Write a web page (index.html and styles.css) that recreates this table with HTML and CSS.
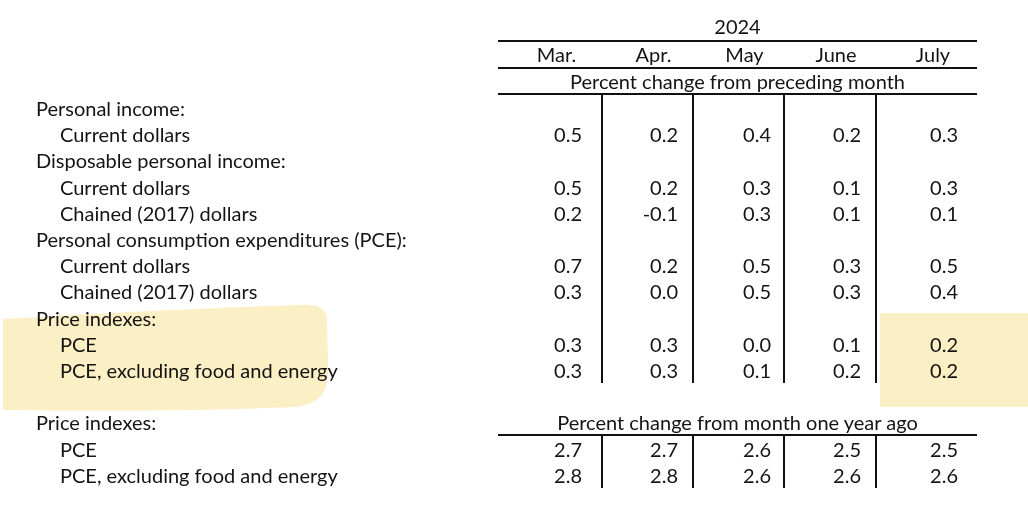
FILE: index.html
```html
<!DOCTYPE html>
<html lang="en">
<head>
<meta charset="utf-8">
<title>Personal income and outlays</title>
<link rel="stylesheet" href="styles.css">
</head>
<body>
<div class="page">
  <div class="grid">
    <div class="lbl head"></div><div class="span year">2024</div>
    <div class="lbl rule-pad"></div><div class="span rule"></div>
    <div class="lbl head"></div>
    <div class="mon">Mar.</div><div class="mon">Apr.</div><div class="mon">May</div><div class="mon">June</div><div class="mon">July</div>
    <div class="lbl rule-pad"></div><div class="span rule"></div>
    <div class="lbl head"></div><div class="span unit">Percent change from preceding month</div>
    <div class="lbl rule-pad"></div><div class="span rule"></div>

    <div class="lbl">Personal income:</div>
    <div class="n c1"></div><div class="n c2"></div><div class="n c3"></div><div class="n c4"></div><div class="n c5"></div>
    <div class="lbl sub">Current dollars</div>
    <div class="n c1">0.5</div><div class="n c2">0.2</div><div class="n c3">0.4</div><div class="n c4">0.2</div><div class="n c5">0.3</div>
    <div class="lbl">Disposable personal income:</div>
    <div class="n c1"></div><div class="n c2"></div><div class="n c3"></div><div class="n c4"></div><div class="n c5"></div>
    <div class="lbl sub">Current dollars</div>
    <div class="n c1">0.5</div><div class="n c2">0.2</div><div class="n c3">0.3</div><div class="n c4">0.1</div><div class="n c5">0.3</div>
    <div class="lbl sub">Chained (2017) dollars</div>
    <div class="n c1">0.2</div><div class="n c2">-0.1</div><div class="n c3">0.3</div><div class="n c4">0.1</div><div class="n c5">0.1</div>
    <div class="lbl">Personal consumption expenditures (PCE):</div>
    <div class="n c1"></div><div class="n c2"></div><div class="n c3"></div><div class="n c4"></div><div class="n c5"></div>
    <div class="lbl sub">Current dollars</div>
    <div class="n c1">0.7</div><div class="n c2">0.2</div><div class="n c3">0.5</div><div class="n c4">0.3</div><div class="n c5">0.5</div>
    <div class="lbl sub">Chained (2017) dollars</div>
    <div class="n c1">0.3</div><div class="n c2">0.0</div><div class="n c3">0.5</div><div class="n c4">0.3</div><div class="n c5">0.4</div>
    <div class="lbl">Price indexes:</div>
    <div class="n c1"></div><div class="n c2"></div><div class="n c3"></div><div class="n c4"></div><div class="n c5"></div>
    <div class="lbl sub">PCE</div>
    <div class="n c1">0.3</div><div class="n c2">0.3</div><div class="n c3">0.0</div><div class="n c4">0.1</div><div class="n c5">0.2</div>
    <div class="lbl sub">PCE, excluding food and energy</div>
    <div class="n c1">0.3</div><div class="n c2">0.3</div><div class="n c3">0.1</div><div class="n c4">0.2</div><div class="n c5">0.2</div>

    <div class="gap"></div>

    <div class="lbl head2">Price indexes:</div><div class="span unit2">Percent change from month one year ago</div>
    <div class="lbl rule-pad"></div><div class="span rule"></div>
    <div class="lbl sub">PCE</div>
    <div class="n c1">2.7</div><div class="n c2">2.7</div><div class="n c3">2.6</div><div class="n c4">2.5</div><div class="n c5">2.5</div>
    <div class="lbl sub">PCE, excluding food and energy</div>
    <div class="n c1">2.8</div><div class="n c2">2.8</div><div class="n c3">2.6</div><div class="n c4">2.6</div><div class="n c5">2.6</div>
  </div>

  <svg class="hl hl-left" width="340" height="420" viewBox="0 0 340 420" aria-hidden="true">
    <path d="M3,319 C90,314 200,308 300,305 C318,304 326,308 327,320 L328,370 C328,392 320,404 296,407 C200,411 100,411 3,410 Z"/>
  </svg>
  <svg class="hl hl-right" width="148" height="94" viewBox="0 0 148 94" aria-hidden="true">
    <path d="M0,0 H148 V94 H0 Z"/>
  </svg>
</div>
</body>
</html>
```

FILE: styles.css
```css
html, body {
  margin: 0;
  padding: 0;
  background: #ffffff;
}

body {
  font-family: Lato, "Open Sans", "Liberation Sans", sans-serif;
  font-size: 20px;
  color: #141414;
}

.page {
  position: relative;
  width: 1028px;
  height: 516px;
  overflow: hidden;
}

.grid {
  display: grid;
  grid-template-columns: 498px 103px 91px 91px 92px 102px;
  padding-top: 13px;
}

.lbl {
  padding-left: 36px;
  white-space: nowrap;
  line-height: 26.2px;
  height: 26.2px;
}

.lbl.sub {
  padding-left: 60px;
}

.lbl.head {
  height: auto;
}

.lbl.rule-pad {
  height: 2px;
  line-height: 2px;
}

.lbl.head2 {
  height: 24px;
  line-height: 24px;
}

.span {
  grid-column: 2 / 7;
  text-align: center;
}

.year {
  line-height: 27px;
  height: 27px;
}

.unit {
  line-height: 24px;
  height: 24px;
}

.unit2 {
  line-height: 24px;
  height: 24px;
}

.rule {
  height: 2px;
  background: #111111;
}

.mon {
  height: 25px;
  line-height: 25px;
  text-align: center;
  padding-left: 14px;
}

.n {
  height: 26.2px;
  line-height: 26.2px;
  text-align: right;
  border-left: 2px solid #111111;
  box-sizing: border-box;
}

.n.c1 {
  border-left: none;
  padding-right: 19px;
}

.n.c2 { padding-right: 14px; }
.n.c3 { padding-right: 12px; }
.n.c4 { padding-right: 14px; }
.n.c5 { padding-right: 19px; }

.gap {
  grid-column: 1 / 7;
  height: 27px;
}

.hl {
  position: absolute;
  pointer-events: none;
  mix-blend-mode: multiply;
}

.hl path {
  fill: #fbefc5;
}

.hl-left {
  left: 0;
  top: 0;
}

.hl-right {
  left: 880px;
  top: 313px;
}
```
